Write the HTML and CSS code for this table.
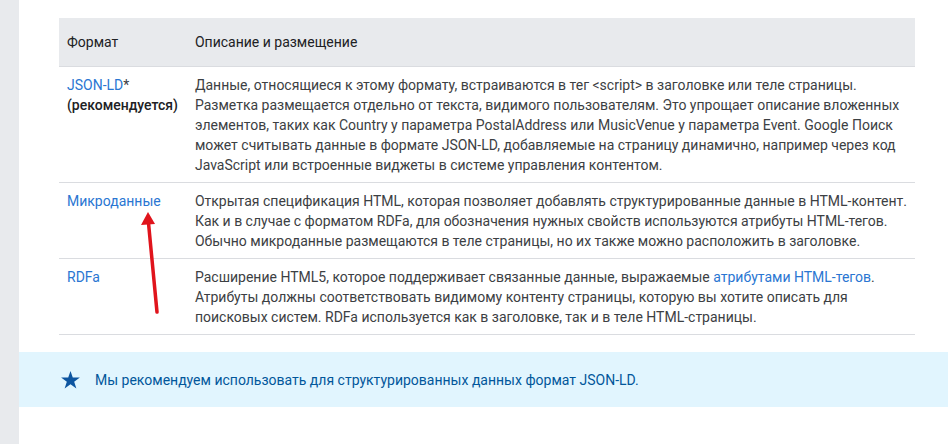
FILE: index.html
```html
<!DOCTYPE html>
<html lang="ru">
<head>
    <meta charset="UTF-8">
    <meta name="viewport" content="width=device-width, initial-scale=1.0">
    <title>Форматы структурированных данных</title>
    <link rel="stylesheet" href="styles.css">
</head>
<body>
    <div class="page">
        <div class="sidebar"></div>

        <main class="content">
            <table class="formats">
                <thead>
                    <tr>
                        <th class="col-format">Формат</th>
                        <th>Описание и размещение</th>
                    </tr>
                </thead>
                <tbody>
                    <tr>
                        <td><a href="#">JSON-LD</a>*<br><strong>(рекомендуется)</strong></td>
                        <td class="desc">
                            Данные, относящиеся к этому формату, встраиваются в тег &lt;script&gt; в заголовке или теле страницы.<br>
                            Разметка размещается отдельно от текста, видимого пользователям. Это упрощает описание вложенных<br>
                            элементов, таких как Country у параметра PostalAddress или MusicVenue у параметра Event. Google Поиск<br>
                            может считывать данные в формате JSON-LD, добавляемые на страницу динамично, например через код<br>
                            JavaScript или встроенные виджеты в системе управления контентом.
                        </td>
                    </tr>
                    <tr>
                        <td><a href="#">Микроданные</a></td>
                        <td class="desc">
                            Открытая спецификация HTML, которая позволяет добавлять структурированные данные в HTML-контент.<br>
                            Как и в случае с форматом RDFa, для обозначения нужных свойств используются атрибуты HTML-тегов.<br>
                            Обычно микроданные размещаются в теле страницы, но их также можно расположить в заголовке.
                        </td>
                    </tr>
                    <tr>
                        <td><a href="#">RDFa</a></td>
                        <td class="desc">
                            Расширение HTML5, которое поддерживает связанные данные, выражаемые <a href="#">атрибутами HTML-тегов</a>.<br>
                            Атрибуты должны соответствовать видимому контенту страницы, которую вы хотите описать для<br>
                            поисковых систем. RDFa используется как в заголовке, так и в теле HTML-страницы.
                        </td>
                    </tr>
                </tbody>
            </table>

            <!-- red pointer drawn over the table -->
            <svg class="pointer" width="26" height="106" viewBox="0 0 26 106">
                <line x1="19" y1="101" x2="10.5" y2="12" stroke="#e0141c" stroke-width="3.5" stroke-linecap="round"/>
                <polygon points="10,1 3,14 17,13" fill="#e0141c"/>
            </svg>

            <div class="note">
                <svg class="star" width="19" height="18" viewBox="0 0 24 23">
                    <path d="M12 0l2.9 8.3H24l-7.3 5.3 2.8 8.7L12 17l-7.5 5.3 2.8-8.7L0 8.3h9.1z" fill="#0d55a0"/>
                </svg>
                <span>Мы рекомендуем использовать для структурированных данных формат JSON-LD.</span>
            </div>
        </main>
    </div>
</body>
</html>
```

FILE: styles.css
```css
body {
    font-family: Roboto, "Noto Sans", Arial, sans-serif;
    font-size: 14px;
    color: #3c4043;
    background-color: #ffffff;
    margin: 0;
}

.page {
    display: flex;
    min-height: 444px;
}

.sidebar {
    width: 19px;
    flex-shrink: 0;
    background-color: #e8eaed;
}

.content {
    position: relative;
    flex: 1;
    padding-top: 18px;
}

a {
    color: #2a76d2;
    text-decoration: none;
}

strong {
    font-weight: 500;
    color: #202124;
}

.formats {
    width: 856px;
    margin-left: 40px;
    border-collapse: collapse;
    line-height: 20px;
}

.formats th {
    background-color: #e8eaed;
    color: #202124;
    font-weight: 400;
    text-align: left;
    height: 48px;
    padding: 0 8px;
    border-bottom: 1px solid #dadce0;
}

.formats .col-format {
    width: 112px;
}

.formats td {
    vertical-align: top;
    padding: 8px 8px 7px;
    border-bottom: 1px solid #dadce0;
}

.formats td.desc {
    white-space: nowrap;
}

.pointer {
    position: absolute;
    left: 119px;
    top: 211px;
}

.note {
    display: flex;
    align-items: center;
    gap: 15px;
    height: 55px;
    margin-top: 17px;
    padding-left: 42px;
    background-color: #e1f5fe;
    color: #01579b;
}

.star {
    flex-shrink: 0;
}
```
